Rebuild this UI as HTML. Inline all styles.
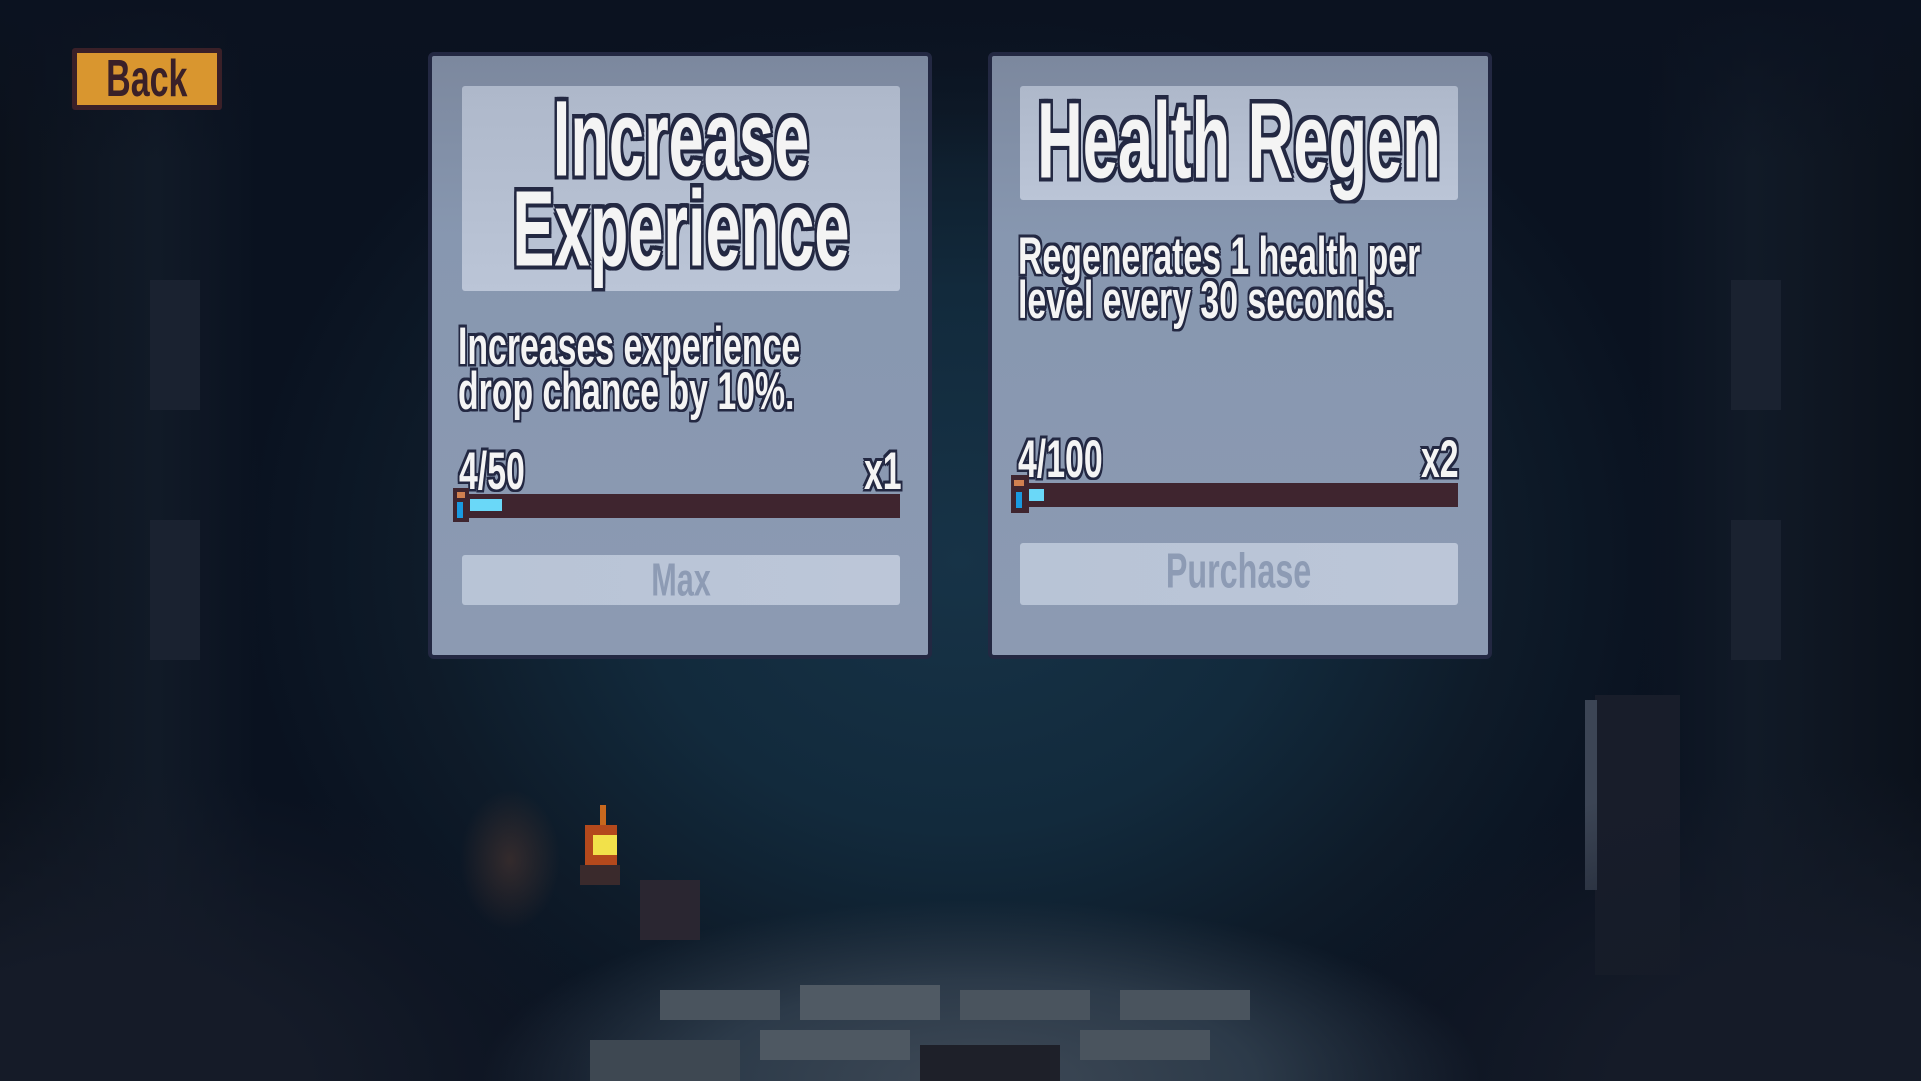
<!DOCTYPE html>
<html><head><meta charset="utf-8"><style>
*{margin:0;padding:0;box-sizing:border-box}
body{width:1921px;height:1081px;overflow:hidden;position:relative;
background:radial-gradient(ellipse 720px 600px at 960px 560px,#173347 0%,#122a3c 45%,#0e1b29 75%,#0a1220 100%);
font-family:"Liberation Sans Narrow","Liberation Sans",sans-serif;font-weight:bold}
.abs{position:absolute}
.fl{position:absolute;background:#4a5560}
.card{position:absolute;border:4px solid #232842;border-radius:6px;background:linear-gradient(180deg,#7c889e 0%,#8797b0 30%,#8c9ab2 100%)}
.tbox{position:absolute;background:linear-gradient(180deg,#aeb8ca,#bbc5d7);border-radius:3px}
.t{position:absolute;color:#f4f4f4;white-space:nowrap;transform:scale(0.81,1.38);transform-origin:center;
text-shadow:3px 0 #232842,-3px 0 #232842,0 3px #232842,0 -3px #232842,3px 3px #232842,-3px -3px #232842,3px -3px #232842,-3px 3px #232842}
.d{transform:scale(0.89,1.4);transform-origin:left center;text-shadow:2px 0 #232842,-2px 0 #232842,0 2px #232842,0 -2px #232842,2px 2px #232842,-2px -2px #232842,2px -2px #232842,-2px 2px #232842}
.bar{position:absolute;background:#3f252f;height:24px}
.btn{position:absolute;background:linear-gradient(90deg,#b8c4d6,#bcc6d8);border-radius:3px;color:#8d9bb4;text-align:center}
</style></head><body>
<div class="abs" style="left:0;top:0;width:260px;height:1081px;background:linear-gradient(90deg,#0b111b,#111a27 60%,rgba(17,26,39,0))"></div>
<div class="abs" style="right:0;top:0;width:280px;height:1081px;background:linear-gradient(270deg,#0b111b,#111a27 60%,rgba(17,26,39,0))"></div>
<div class="abs" style="left:0;top:0;width:1921px;height:160px;background:linear-gradient(180deg,#0b1220,rgba(11,18,32,0))"></div>
<div class="abs" style="left:150px;top:280px;width:50px;height:130px;background:#1a2230"></div>
<div class="abs" style="left:150px;top:520px;width:50px;height:140px;background:#1a2230"></div>
<div class="abs" style="right:140px;top:280px;width:50px;height:130px;background:#1a2230"></div>
<div class="abs" style="right:140px;top:520px;width:50px;height:140px;background:#1a2230"></div>
<div class="abs" style="left:1595px;top:695px;width:85px;height:280px;background:#181d2a"></div>
<div class="abs" style="left:1585px;top:700px;width:12px;height:190px;background:#3c4555"></div>
<div class="abs" style="left:0;top:760px;width:620px;height:321px;background:radial-gradient(ellipse 520px 320px at 100px 330px,#151b28 40%,rgba(21,27,40,0) 100%)"></div>
<div class="abs" style="right:0;top:760px;width:620px;height:321px;background:radial-gradient(ellipse 520px 320px at 520px 330px,#151b28 40%,rgba(21,27,40,0) 100%)"></div>
<div class="abs" style="left:480px;top:900px;width:1000px;height:181px;background:radial-gradient(ellipse 500px 180px at 500px 180px,#3e4956 0%,#2c3a49 55%,rgba(28,45,60,0) 100%)"></div>
<div class="fl" style="left:660px;top:990px;width:120px;height:30px;background:#4a545e"></div>
<div class="fl" style="left:800px;top:985px;width:140px;height:35px;background:#505a64"></div>
<div class="fl" style="left:960px;top:990px;width:130px;height:30px;background:#4a545e"></div>
<div class="fl" style="left:1120px;top:990px;width:130px;height:30px;background:#4a545e"></div>
<div class="fl" style="left:590px;top:1040px;width:150px;height:41px;background:#3e4852"></div>
<div class="fl" style="left:760px;top:1030px;width:150px;height:30px;background:#4e5862"></div>
<div class="fl" style="left:1080px;top:1030px;width:130px;height:30px;background:#4a545e"></div>
<div class="fl" style="left:920px;top:1045px;width:140px;height:36px;background:#1e2029"></div>
<div class="abs" style="left:460px;top:790px;width:100px;height:140px;background:radial-gradient(ellipse 50px 70px at 50px 70px,rgba(90,60,50,.5),rgba(90,60,50,0))"></div>
<div class="abs" style="left:600px;top:805px;width:6px;height:25px;background:#c8681e"></div>
<div class="abs" style="left:585px;top:825px;width:32px;height:40px;background:#b4491c"></div>
<div class="abs" style="left:593px;top:835px;width:24px;height:20px;background:#f2e14a"></div>
<div class="abs" style="left:580px;top:865px;width:40px;height:20px;background:#3a2a2c"></div>
<div class="abs" style="left:640px;top:880px;width:60px;height:60px;background:#2a2631"></div>

<div class="abs" style="left:72px;top:48px;width:150px;height:62px;background:#d9962f;border:5px solid #3a2028;border-radius:3px;color:#3a2028;font-size:40px;text-align:center;line-height:52px"><span style="display:inline-block;transform:scale(0.85,1.3)">Back</span></div>

<div class="card" style="left:428px;top:52px;width:504px;height:607px"></div>
<div class="tbox" style="left:462px;top:86px;width:438px;height:205px"></div>
<div class="t" style="left:281px;width:800px;text-align:center;top:98px;font-size:78px;line-height:80px">Increase</div>
<div class="t" style="left:281px;width:800px;text-align:center;top:188px;font-size:78px;line-height:80px">Experience</div>
<div class="t d" style="left:458px;top:326px;font-size:38px;line-height:42px">Increases experience</div>
<div class="t d" style="left:458px;top:371px;font-size:38px;line-height:42px">drop chance by 10%.</div>
<div class="t d" style="left:459px;top:451px;font-size:38px;line-height:42px">4/50</div>
<div class="t d" style="left:864px;top:451px;font-size:38px;line-height:42px">x1</div>
<div class="bar" style="left:462px;top:494px;width:438px"></div>
<div class="abs" style="left:470px;top:499px;width:32px;height:12px;background:#6ad8f8"></div>
<div class="abs" style="left:453px;top:488px;width:16px;height:34px;background:#3f252f"></div>
<div class="abs" style="left:457px;top:492px;width:8px;height:6px;background:#d08050"></div>
<div class="abs" style="left:457px;top:502px;width:6px;height:16px;background:#1a9ae0"></div>
<div class="btn" style="left:462px;top:555px;width:438px;height:50px;font-size:36px;line-height:50px"><span style="display:inline-block;transform:scale(0.85,1.3)">Max</span></div>

<div class="card" style="left:988px;top:52px;width:504px;height:607px"></div>
<div class="tbox" style="left:1020px;top:86px;width:438px;height:114px"></div>
<div class="t" style="left:839px;width:800px;text-align:center;top:100px;font-size:78px;line-height:80px">Health Regen</div>
<div class="t d" style="left:1018px;top:236px;font-size:38px;line-height:42px">Regenerates 1 health per</div>
<div class="t d" style="left:1018px;top:280px;font-size:38px;line-height:42px">level every 30 seconds.</div>
<div class="t d" style="left:1018px;top:439px;font-size:38px;line-height:42px">4/100</div>
<div class="t d" style="left:1421px;top:439px;font-size:38px;line-height:42px">x2</div>
<div class="bar" style="left:1028px;top:483px;width:430px"></div>
<div class="abs" style="left:1029px;top:489px;width:15px;height:12px;background:#6ad8f8"></div>
<div class="abs" style="left:1011px;top:475px;width:18px;height:38px;background:#3f252f"></div>
<div class="abs" style="left:1014px;top:480px;width:10px;height:6px;background:#d08050"></div>
<div class="abs" style="left:1016px;top:492px;width:6px;height:16px;background:#1a9ae0"></div>
<div class="btn" style="left:1020px;top:543px;width:438px;height:62px;font-size:38px;line-height:58px"><span style="display:inline-block;transform:scale(0.85,1.3)">Purchase</span></div>
</body></html>
